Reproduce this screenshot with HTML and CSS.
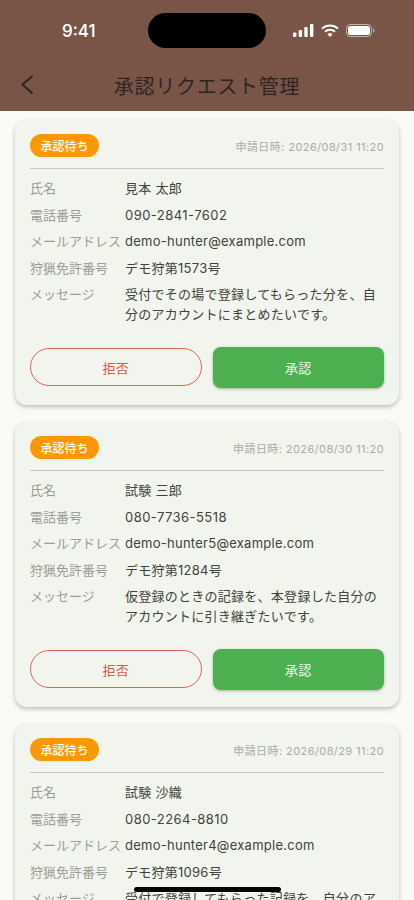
FILE: index.html
```html
<!DOCTYPE html>
<html lang="ja">
<head>
<meta charset="utf-8">
<title>承認リクエスト管理</title>
<link rel="stylesheet" href="styles.css">
</head>
<body>
<div class="screen">
  <header class="appbar">
    <div class="status">
      <span class="time">9:41</span>
      <div class="status-icons">
        <svg class="ic-signal" width="21" height="13" viewBox="0 0 21 13"><rect x="0" y="8.5" width="3.4" height="4.5" rx="1" fill="#fff"/><rect x="5.7" y="6" width="3.4" height="7" rx="1" fill="#fff"/><rect x="11.3" y="3" width="3.4" height="10" rx="1" fill="#fff"/><rect x="17" y="0" width="3.4" height="13" rx="1" fill="#fff"/></svg>
        <svg class="ic-wifi" width="18" height="13" viewBox="0 0 18 13"><path d="M1 4.6a11.6 11.6 0 0 1 16 0" fill="none" stroke="#fff" stroke-width="2"/><path d="M4 7.8a7.2 7.2 0 0 1 10 0" fill="none" stroke="#fff" stroke-width="2"/><path d="M9 13 6.4 10.3a3.7 3.7 0 0 1 5.2 0z" fill="#fff"/></svg>
        <svg class="ic-batt" width="29" height="13" viewBox="0 0 29 13"><rect x=".5" y=".5" width="25" height="12" rx="3.8" fill="none" stroke="#fff" stroke-opacity=".55"/><rect x="2" y="2" width="22" height="9" rx="2.5" fill="#fff"/><path d="M27 4.5v4c.9-.3 1.5-1.1 1.5-2s-.6-1.700-1.500-2z" fill="#fff" fill-opacity=".5"/></svg>
      </div>
    </div>
    <div class="island"></div>
    <div class="titlebar">
      <svg class="back" width="14" height="20" viewBox="0 0 14 20"><path d="M12.500 1 2.500 9.500l10 9" fill="none" stroke="#2e2522" stroke-width="2.100"/></svg>
      <h1 class="title">承認リクエスト管理</h1>
    </div>
  </header>

  <main class="list">
    <article class="card">
      <div class="card-top"><span class="badge">承認待ち</span><span class="date">申請日時: 2026/08/31 11:20</span></div>
      <dl class="info">
        <div class="row"><dt>氏名</dt><dd>見本 太郎</dd></div>
        <div class="row"><dt>電話番号</dt><dd class="phone">090-2841-7602</dd></div>
        <div class="row"><dt>メールアドレス</dt><dd>demo-hunter@example.com</dd></div>
        <div class="row"><dt>狩猟免許番号</dt><dd>デモ狩第1573号</dd></div>
        <div class="row"><dt>メッセージ</dt><dd>受付でその場で登録してもらった分を、自分のアカウントにまとめたいです。</dd></div>
      </dl>
      <div class="actions"><button class="reject">拒否</button><button class="approve">承認</button></div>
    </article>

    <article class="card">
      <div class="card-top"><span class="badge">承認待ち</span><span class="date">申請日時: 2026/08/30 11:20</span></div>
      <dl class="info">
        <div class="row"><dt>氏名</dt><dd>試験 三郎</dd></div>
        <div class="row"><dt>電話番号</dt><dd class="phone">080-7736-5518</dd></div>
        <div class="row"><dt>メールアドレス</dt><dd>demo-hunter5@example.com</dd></div>
        <div class="row"><dt>狩猟免許番号</dt><dd>デモ狩第1284号</dd></div>
        <div class="row"><dt>メッセージ</dt><dd>仮登録のときの記録を、本登録した自分のアカウントに引き継ぎたいです。</dd></div>
      </dl>
      <div class="actions"><button class="reject">拒否</button><button class="approve">承認</button></div>
    </article>

    <article class="card">
      <div class="card-top"><span class="badge">承認待ち</span><span class="date">申請日時: 2026/08/29 11:20</span></div>
      <dl class="info">
        <div class="row"><dt>氏名</dt><dd>試験 沙織</dd></div>
        <div class="row"><dt>電話番号</dt><dd class="phone">080-2264-8810</dd></div>
        <div class="row"><dt>メールアドレス</dt><dd>demo-hunter4@example.com</dd></div>
        <div class="row"><dt>狩猟免許番号</dt><dd>デモ狩第1096号</dd></div>
        <div class="row"><dt>メッセージ</dt><dd>受付で登録してもらった記録を、自分のアカウントにまとめたいです。</dd></div>
      </dl>
      <div class="actions"><button class="reject">拒否</button><button class="approve">承認</button></div>
    </article>
  </main>
  <div class="home"></div>
</div>
</body>
</html>
```
FILE: styles.css
```css
* { box-sizing: border-box; }
html, body { margin: 0; padding: 0; }
body { font-family: Inter, "Noto Sans CJK JP", sans-serif; background: #f9fcf5; }
.screen { position: relative; width: 414px; height: 900px; overflow: hidden; background: #f9fcf5; }

.appbar { position: relative; height: 111px; background: #795548; display: flex; flex-direction: column; }
.status { height: 59px; display: flex; justify-content: space-between; align-items: center; padding: 2px 39px 0 62px; }
.time { color: #fff; font-size: 17px; font-weight: 500; }
.status-icons { display: flex; align-items: center; gap: 7px; }
.island { position: absolute; left: 148px; top: 13px; width: 118px; height: 35px; border-radius: 18px; background: #000; }
.titlebar { position: relative; height: 52px; display: flex; align-items: center; justify-content: center; }
.back { position: absolute; left: 20px; top: 16px; }
.title { margin: 0; font-size: 20px; font-weight: 400; letter-spacing: .7px; color: #2e2522; }

.list { display: flex; flex-direction: column; gap: 17px; padding: 9px 15px 0; }
.card { flex: none; height: 285px; background: #f2f5ed; border-radius: 12px; padding: 14px 15px 0; box-shadow: 0 2px 4px rgba(0,0,0,.25); }
.card-top { display: flex; justify-content: space-between; align-items: center; height: 24px; padding-bottom: 1px; }
.badge { width: 69px; height: 23px; border-radius: 12px; background: #ff9800; color: #fff; font-size: 12px; font-weight: 500; display: flex; align-items: center; justify-content: center; }
.date { font-size: 11px; color: #a9aca6; letter-spacing: .42px; }

.info { margin: 10px 0 0; padding-top: 10.300px; border-top: 1px solid #c6c9c2; display: flex; flex-direction: column; gap: 7px; }
.row { display: flex; font-size: 13px; line-height: 19.500px; }
.row dt { width: 95px; flex: none; color: #9a9d97; }
.row dd { margin: 0; flex: 1; color: #40423c; letter-spacing: .26px; }
.row .phone { letter-spacing: .45px; }

.actions { display: grid; grid-template-columns: 1fr 1fr; gap: 11px; align-items: center; margin-top: 22.700px; }
.actions button { padding: 0; font-family: inherit; font-size: 13px; letter-spacing: .3px; }
.reject { height: 38px; border-radius: 19px; background: transparent; border: 1.200px solid #e5635a; color: #e5534b; }
.approve { height: 41px; border-radius: 8px; background: #4caf50; border: 0; color: #f0f7ee; box-shadow: 0 1px 3px rgba(0,0,0,.3); }

.home { position: absolute; left: 134px; top: 887px; width: 147px; height: 5px; border-radius: 3px; background: #000; }
```
